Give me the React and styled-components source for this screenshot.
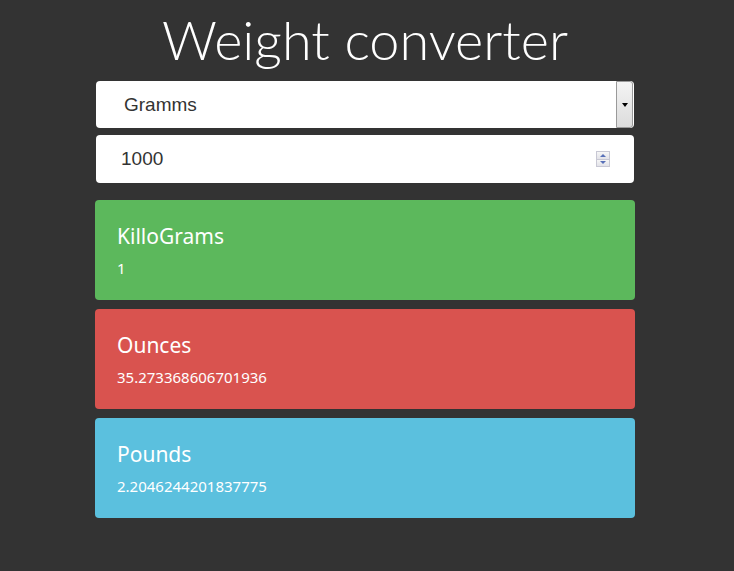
import styled, { createGlobalStyle } from 'styled-components';
import { useState } from 'react';

const GlobalStyle = createGlobalStyle`
    html, body {
        margin: 0;
        padding: 0;
        background-color: #333333;
    }
    body {
        font-family: "Noto Sans", "Open Sans", sans-serif;
        min-height: 571px;
    }
`;

const units = {
    Gramms: 1,
    KilloGrams: 1000,
    Ounces: 28.349523125,
    Pounds: 453.59237,
};

const results = [
    { name: 'KilloGrams', color: '#5cb85c', value: '1' },
    { name: 'Ounces', color: '#d9534f', value: '35.273368606701936' },
    { name: 'Pounds', color: '#5bc0de', value: '2.2046244201837775' },
];

function App(){
    const [unit, setUnit] = useState('Gramms');
    const [amount, setAmount] = useState('1000');

    return (
        <>
            <GlobalStyle/>
            <Page>
                <Title>Weight converter</Title>
                <Form>
                    <SelectBox>
                        <Select value={unit} onChange={(e) => setUnit(e.target.value)}>
                            {Object.keys(units).map((u) => <option key={u}>{u}</option>)}
                        </Select>
                        <ArrowBox><Arrow/></ArrowBox>
                    </SelectBox>
                    <InputBox>
                        <NumberInput type="number" value={amount} onChange={(e) => setAmount(e.target.value)}/>
                        <Spinner>
                            <SpinButton><SpinUp/></SpinButton>
                            <SpinButton><SpinDown/></SpinButton>
                        </Spinner>
                    </InputBox>
                </Form>
                <Cards>
                    {results.map((r) => (
                        <Card key={r.name} color={r.color}>
                            <CardTitle>{r.name}</CardTitle>
                            <CardValue>{r.value}</CardValue>
                        </Card>
                    ))}
                </Cards>
            </Page>
        </>
    )
}

const Page = styled.div`
    display: flex;
    flex-direction: column;
    width: 540px;
    margin-left: 95px;
    padding-top: 3px;
`;
const Title = styled.h1`
    margin: 0;
    text-align: center;
    font-family: Lato, "Open Sans", sans-serif;
    font-weight: 300;
    font-size: 54px;
    line-height: 74px;
    color: #ffffff;
`;
const Form = styled.div`
    display: flex;
    flex-direction: column;
    gap: 7px;
    padding: 4px 1px 0;
`;
const SelectBox = styled.div`
    display: flex;
    height: 47px;
    background: #ffffff;
    border-radius: 4px;
    overflow: hidden;
`;
const Select = styled.select`
    flex: 1;
    appearance: none;
    border: 0;
    outline: none;
    background: transparent;
    padding: 0 0 0 28px;
    font-family: "Liberation Sans", Arial, sans-serif;
    font-size: 19px;
    color: #333333;
`;
const ArrowBox = styled.div`
    display: flex;
    align-items: center;
    justify-content: center;
    width: 15px;
    margin: 0 1px 0 0;
    border: 1px solid #9a9a9a;
    border-radius: 0 3px 3px 0;
    background: linear-gradient(#f4f4f4, #dcdcdc);
`;
const Arrow = styled.span`
    width: 0;
    height: 0;
    border-left: 3px solid transparent;
    border-right: 3px solid transparent;
    border-top: 4px solid #000000;
`;
const InputBox = styled.div`
    display: flex;
    align-items: center;
    height: 48px;
    background: #ffffff;
    border-radius: 4px;
    padding: 0 24px 0 23px;
`;
const NumberInput = styled.input`
    flex: 1;
    border: 0;
    outline: none;
    background: transparent;
    font-family: "Liberation Sans", Arial, sans-serif;
    font-size: 19px;
    color: #333333;
    appearance: textfield;
    -moz-appearance: textfield;
    &::-webkit-inner-spin-button,
    &::-webkit-outer-spin-button {
        -webkit-appearance: none;
        margin: 0;
    }
`;
const Spinner = styled.div`
    display: flex;
    flex-direction: column;
    width: 14px;
    height: 16px;
    border: 1px solid #c8c8d4;
    box-sizing: border-box;
`;
const SpinButton = styled.div`
    flex: 1;
    display: flex;
    align-items: center;
    justify-content: center;
    background: linear-gradient(#f6f6f6, #e2e2e8);
    & + & {
        border-top: 1px solid #c8c8d4;
    }
`;
const SpinUp = styled.span`
    border-left: 3px solid transparent;
    border-right: 3px solid transparent;
    border-bottom: 3px solid #5870b8;
`;
const SpinDown = styled.span`
    border-left: 3px solid transparent;
    border-right: 3px solid transparent;
    border-top: 3px solid #5870b8;
`;
const Cards = styled.div`
    display: flex;
    flex-direction: column;
    gap: 9px;
    margin-top: 17px;
`;
const Card = styled.div`
    display: flex;
    flex-direction: column;
    height: 100px;
    box-sizing: border-box;
    padding: 20px 22px 0;
    border-radius: 4px;
    background-color: ${props => props.color};
    color: #ffffff;
`;
const CardTitle = styled.div`
    font-size: 21px;
    line-height: 32px;
`;
const CardValue = styled.div`
    font-size: 15px;
    line-height: 20px;
    margin-top: 6px;
`;

export default App;
